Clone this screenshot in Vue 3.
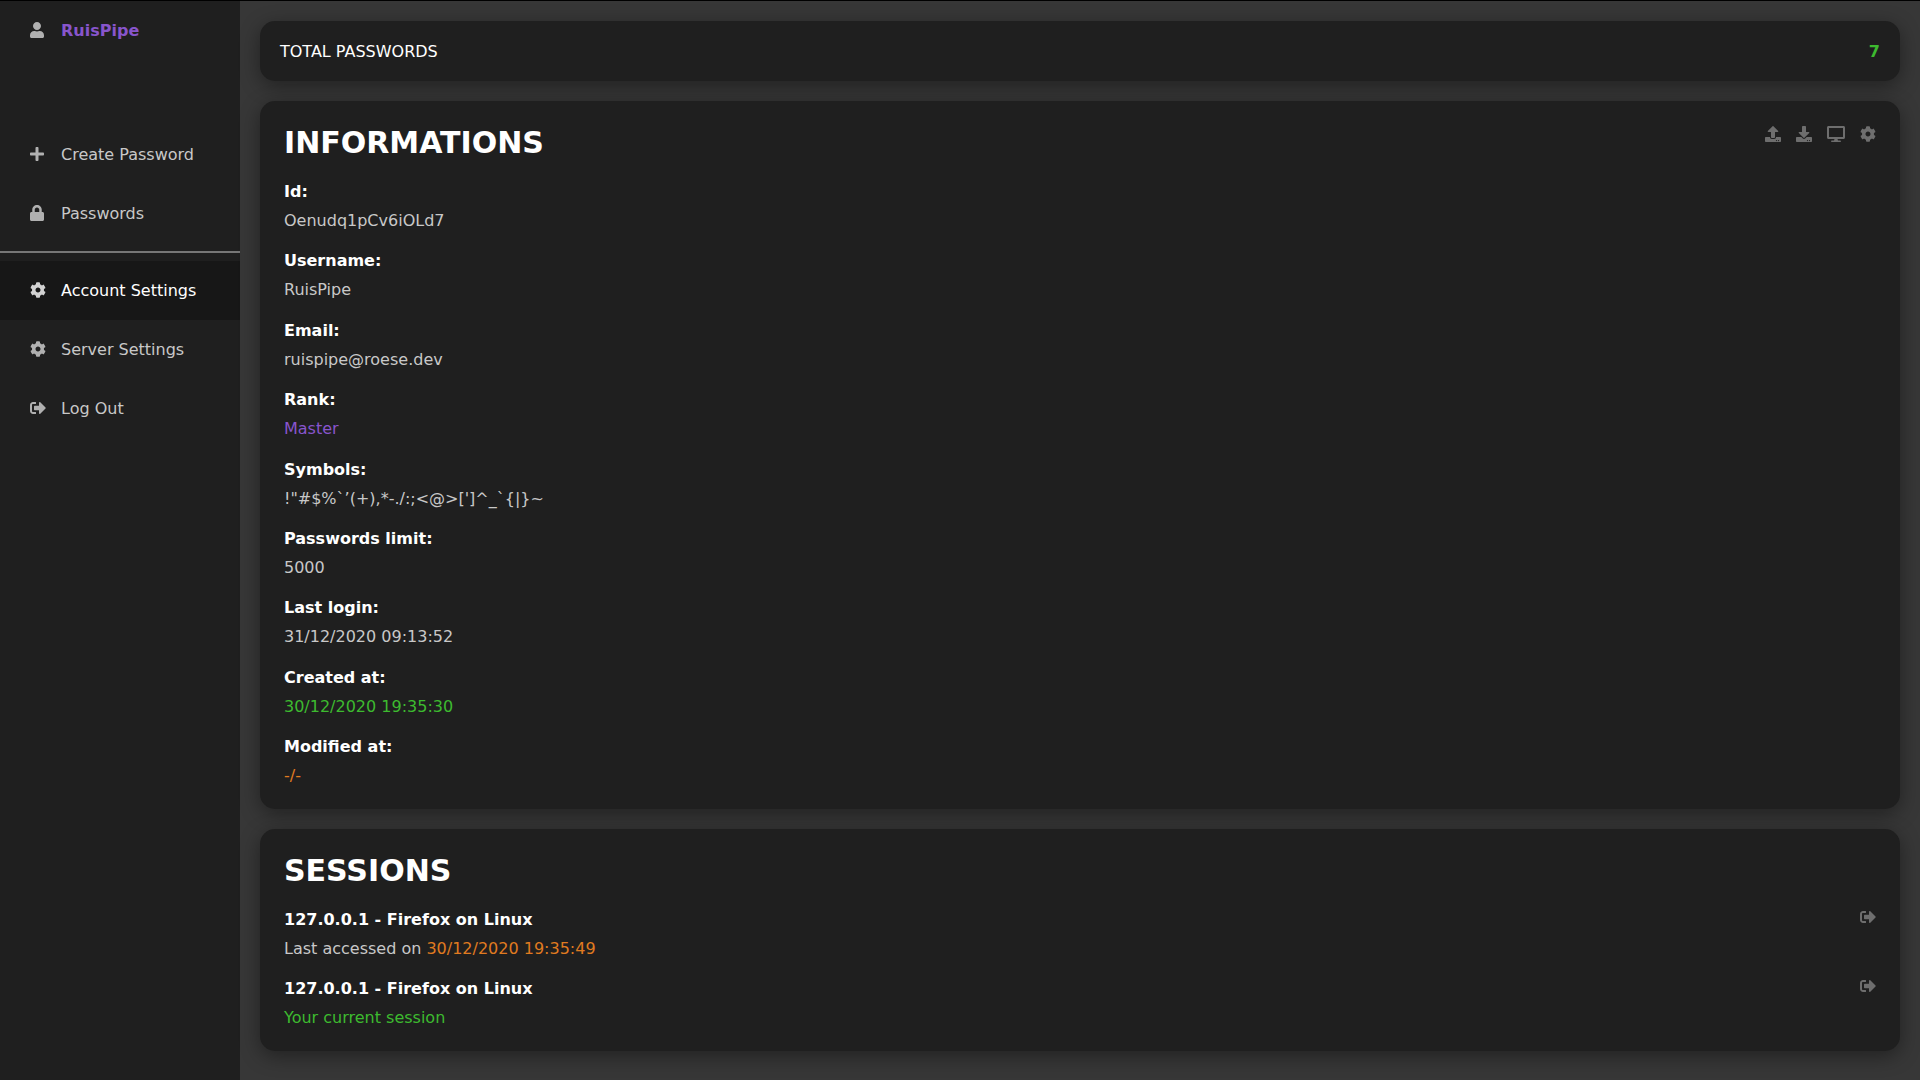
<script setup>
const icons = {
  user: { w: 448, d: 'M224 256c70.7 0 128-57.3 128-128S294.7 0 224 0 96 57.3 96 128s57.3 128 128 128zm89.6 32h-16.7c-22.2 10.2-46.9 16-72.9 16s-50.6-5.8-72.9-16h-16.7C60.2 288 0 348.2 0 422.4V464c0 26.5 21.5 48 48 48h352c26.5 0 48-21.5 48-48v-41.6c0-74.2-60.2-134.4-134.4-134.4z' },
  plus: { w: 448, d: 'M416 208H272V64c0-17.67-14.33-32-32-32h-32c-17.67 0-32 14.33-32 32v144H32c-17.67 0-32 14.33-32 32v32c0 17.67 14.33 32 32 32h144v144c0 17.67 14.33 32 32 32h32c17.67 0 32-14.33 32-32V304h144c17.67 0 32-14.33 32-32v-32c0-17.67-14.33-32-32-32z' },
  lock: { w: 448, d: 'M400 224h-24v-72C376 68.2 307.8 0 224 0S72 68.2 72 152v72H48c-26.5 0-48 21.5-48 48v192c0 26.5 21.5 48 48 48h352c26.5 0 48-21.5 48-48V272c0-26.5-21.5-48-48-48zm-104 0H152v-72c0-39.7 32.3-72 72-72s72 32.3 72 72v72z' },
  cog: { w: 512, d: 'M487.4 315.7l-42.6-24.6c4.3-23.2 4.3-47 0-70.2l42.6-24.6c4.9-2.8 7.1-8.6 5.5-14-11.1-35.6-30-67.8-54.7-94.6-3.8-4.1-10-5.1-14.8-2.3L380.8 110c-17.9-15.4-38.5-27.3-60.8-35.1V25.8c0-5.6-3.9-10.5-9.4-11.7-36.7-8.2-74.3-7.8-109.2 0-5.5 1.2-9.4 6.1-9.4 11.7V75c-22.2 7.9-42.8 19.8-60.8 35.1L88.7 85.5c-4.9-2.8-11-1.9-14.8 2.3-24.7 26.7-43.6 58.9-54.7 94.6-1.7 5.4.6 11.2 5.5 14L67.3 221c-4.3 23.2-4.3 47 0 70.2l-42.6 24.6c-4.9 2.8-7.1 8.6-5.5 14 11.1 35.6 30 67.8 54.7 94.6 3.8 4.1 10 5.1 14.8 2.3l42.6-24.6c17.9 15.4 38.5 27.3 60.8 35.1v49.2c0 5.6 3.9 10.5 9.4 11.7 36.7 8.2 74.3 7.8 109.2 0 5.5-1.2 9.4-6.1 9.4-11.7v-49.2c22.2-7.9 42.8-19.8 60.8-35.1l42.6 24.6c4.9 2.8 11 1.9 14.8-2.3 24.7-26.7 43.6-58.9 54.7-94.6 1.5-5.5-.7-11.3-5.6-14.1zM256 336c-44.1 0-80-35.9-80-80s35.9-80 80-80 80 35.9 80 80-35.9 80-80 80z' },
  signOut: { w: 512, d: 'M497 273L329 441c-15 15-41 4.5-41-17v-96H152c-13.3 0-24-10.7-24-24v-96c0-13.3 10.7-24 24-24h136V88c0-21.4 25.9-32 41-17l168 168c9.3 9.4 9.3 24.6 0 34zM192 436v-40c0-6.6-5.4-12-12-12H96c-17.7 0-32-14.3-32-32V160c0-17.7 14.3-32 32-32h84c6.6 0 12-5.4 12-12V76c0-6.6-5.4-12-12-12H96c-53 0-96 43-96 96v192c0 53 43 96 96 96h84c6.6 0 12-5.4 12-12z' },
  upload: { w: 512, d: 'M296 384h-80c-13.3 0-24-10.7-24-24V192h-87.7c-17.8 0-26.7-21.5-14.1-34.1L242.3 5.7c7.5-7.5 19.8-7.5 27.3 0l152.2 152.2c12.6 12.6 3.7 34.1-14.1 34.1H320v168c0 13.3-10.7 24-24 24zm216-8v112c0 13.3-10.7 24-24 24H24c-13.3 0-24-10.7-24-24V376c0-13.3 10.7-24 24-24h136v8c0 30.9 25.1 56 56 56h80c30.9 0 56-25.1 56-56v-8h136c13.3 0 24 10.7 24 24zm-124 88c0-11-9-20-20-20s-20 9-20 20 9 20 20 20 20-9 20-20zm64 0c0-11-9-20-20-20s-20 9-20 20 9 20 20 20 20-9 20-20z' },
  download: { w: 512, d: 'M216 0h80c13.3 0 24 10.7 24 24v168h87.7c17.8 0 26.7 21.5 14.1 34.1L269.7 378.3c-7.5 7.5-19.8 7.5-27.3 0L90.1 226.1c-12.6-12.6-3.7-34.1 14.1-34.1H192V24c0-13.3 10.7-24 24-24zm296 376v112c0 13.3-10.7 24-24 24H24c-13.3 0-24-10.7-24-24V376c0-13.3 10.7-24 24-24h146.7l49 49c20.1 20.1 52.5 20.1 72.6 0l49-49H488c13.3 0 24 10.7 24 24zm-124 88c0-11-9-20-20-20s-20 9-20 20 9 20 20 20 20-9 20-20zm64 0c0-11-9-20-20-20s-20 9-20 20 9 20 20 20 20-9 20-20z' },
  desktop: { w: 576, d: 'M528 0H48C21.5 0 0 21.5 0 48v320c0 26.5 21.5 48 48 48h192l-16 48h-72c-13.3 0-24 10.7-24 24s10.7 24 24 24h272c13.3 0 24-10.7 24-24s-10.7-24-24-24h-72l-16-48h192c26.5 0 48-21.5 48-48V48c0-26.5-21.5-48-48-48zm-16 352H64V64h448v288z' },
}

const mainLinks = [
  { icon: 'plus', label: 'Create Password' },
  { icon: 'lock', label: 'Passwords' },
]
const systemLinks = [
  { icon: 'cog', label: 'Account Settings', active: true },
  { icon: 'cog', label: 'Server Settings' },
  { icon: 'signOut', label: 'Log Out' },
]
const actions = [
  { icon: 'upload', label: 'Import' },
  { icon: 'download', label: 'Export' },
  { icon: 'desktop', label: 'Sessions' },
  { icon: 'cog', label: 'Edit' },
]
const details = [
  { label: 'Id:', value: 'Oenudq1pCv6iOLd7' },
  { label: 'Username:', value: 'RuisPipe' },
  { label: 'Email:', value: 'ruispipe@roese.dev' },
  { label: 'Rank:', value: 'Master', tone: 'purple' },
  { label: 'Symbols:', value: '!"#$%`’(+),*-./:;<@>[\']^_`{|}~' },
  { label: 'Passwords limit:', value: '5000' },
  { label: 'Last login:', value: '31/12/2020 09:13:52' },
  { label: 'Created at:', value: '30/12/2020 19:35:30', tone: 'green' },
  { label: 'Modified at:', value: '-/-', tone: 'orange' },
]
const sessions = [
  { name: '127.0.0.1 - Firefox on Linux', accessed: '30/12/2020 19:35:49' },
  { name: '127.0.0.1 - Firefox on Linux', current: true },
]
</script>

<template>
  <div class="app">
    <nav class="sidebar">
      <a class="nav-link profile" href="#">
        <span class="nav-icon">
          <svg class="icon" :viewBox="`0 0 ${icons.user.w} 512`" aria-hidden="true"><path :d="icons.user.d" /></svg>
        </span>
        <span class="purple">RuisPipe</span>
      </a>
      <a v-for="link in mainLinks" :key="link.label" class="nav-link" href="#">
        <span class="nav-icon">
          <svg class="icon" :viewBox="`0 0 ${icons[link.icon].w} 512`" aria-hidden="true"><path :d="icons[link.icon].d" /></svg>
        </span>
        <span>{{ link.label }}</span>
      </a>
      <hr class="divider" />
      <a v-for="link in systemLinks" :key="link.label" class="nav-link" :class="{ active: link.active }" href="#">
        <span class="nav-icon">
          <svg class="icon" :viewBox="`0 0 ${icons[link.icon].w} 512`" aria-hidden="true"><path :d="icons[link.icon].d" /></svg>
        </span>
        <span>{{ link.label }}</span>
      </a>
    </nav>

    <main class="content">
      <section class="card total">
        <span>TOTAL PASSWORDS</span>
        <strong class="green">7</strong>
      </section>

      <section class="card panel">
        <header class="panel-head">
          <h1>INFORMATIONS</h1>
          <div class="actions">
            <button v-for="action in actions" :key="action.label" type="button" class="icon-button" :aria-label="action.label">
              <svg class="icon" :viewBox="`0 0 ${icons[action.icon].w} 512`" aria-hidden="true"><path :d="icons[action.icon].d" /></svg>
            </button>
          </div>
        </header>
        <dl class="list details">
          <div v-for="item in details" :key="item.label" class="entry">
            <dt class="label">{{ item.label }}</dt>
            <dd class="value" :class="item.tone">{{ item.value }}</dd>
          </div>
        </dl>
      </section>

      <section class="card panel">
        <header class="panel-head">
          <h1>SESSIONS</h1>
        </header>
        <ul class="list">
          <li v-for="(session, i) in sessions" :key="i" class="session">
            <div class="entry">
              <span class="label">{{ session.name }}</span>
              <span v-if="session.current" class="value green">Your current session</span>
              <span v-else class="value">Last accessed on <span class="orange">{{ session.accessed }}</span></span>
            </div>
            <button type="button" class="icon-button" aria-label="End session">
              <svg class="icon" :viewBox="`0 0 ${icons.signOut.w} 512`" aria-hidden="true"><path :d="icons.signOut.d" /></svg>
            </button>
          </li>
        </ul>
      </section>
    </main>
  </div>
</template>

<style>
body {
  margin: 0;
  background: #373737;
}
</style>

<style scoped>
.app {
  display: flex;
  min-height: 100vh;
  box-sizing: border-box;
  border-top: 1px solid #000;
  background: #373737;
  color: #fff;
  font-family: "DejaVu Sans", sans-serif;
  font-size: 16px;
  line-height: 19px;
}

.sidebar {
  flex: 0 0 240px;
  background: #1f1f1f;
}

.nav-link {
  display: flex;
  align-items: center;
  gap: 15px;
  padding: 20px 30px;
  color: #c8c8c8;
  text-decoration: none;
  white-space: nowrap;
}

.nav-link.profile {
  margin-bottom: 65px;
  font-weight: bold;
}

.nav-link.active {
  background: #171717;
  color: #fff;
}

.nav-icon {
  display: flex;
  align-items: flex-start;
  width: 16px;
  height: 17px;
  color: #b0b0b0;
}

.active .nav-icon {
  color: #d2d2d2;
}

.icon {
  display: block;
  height: 16px;
  fill: currentColor;
}

.divider {
  height: 2px;
  margin: 8px 0;
  border: 0;
  background: #777;
}

.content {
  flex: 1;
  min-width: 0;
  display: flex;
  flex-direction: column;
  gap: 20px;
  padding: 20px;
}

.card {
  border-radius: 15px;
  background: #1f1f1f;
  box-shadow: 0 5px 20px rgba(0, 0, 0, 0.4);
}

.total {
  display: flex;
  justify-content: space-between;
  padding: 21px 20px 20px;
}

.panel {
  padding: 24px;
}

.panel-head {
  display: flex;
  justify-content: space-between;
  align-items: flex-start;
  margin-bottom: 22px;
}

h1 {
  margin: 0;
  font-size: 30px;
  line-height: 35px;
}

.actions {
  display: flex;
  gap: 15px;
  padding-top: 1px;
}

.icon-button {
  padding: 0;
  border: 0;
  background: none;
  color: #6e6e6e;
  cursor: pointer;
}

.list {
  display: flex;
  flex-direction: column;
  gap: 21px;
  margin: 0;
  padding: 0;
  list-style: none;
}

.details {
  justify-content: space-between;
  min-height: 603px;
}

.entry {
  display: flex;
  flex-direction: column;
  gap: 10px;
}

.session {
  display: flex;
  justify-content: space-between;
  align-items: flex-start;
}

.session .icon-button {
  margin-top: -1px;
}

.label {
  font-weight: bold;
}

.value {
  margin: 0;
  color: #c8c8c8;
}

.purple {
  color: #8855cc;
}

.green {
  color: #3dba2f;
}

.orange {
  color: #e07b20;
}
</style>
